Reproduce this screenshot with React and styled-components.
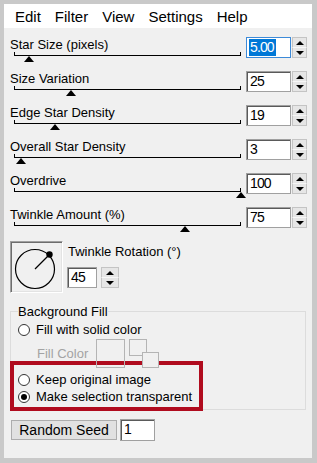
import React from 'react';
import styled, { createGlobalStyle } from 'styled-components';

const GlobalStyle = createGlobalStyle`
  html, body {
    margin: 0;
    padding: 0;
    background: #c9c9c9;
  }
  body {
    font-family: "Liberation Sans", Arial, sans-serif;
    color: #000;
  }
`;

const Frame = styled.div`
  width: 317px;
  height: 463px;
  box-sizing: border-box;
  padding: 4px 5px 5px 4px;
  background: #c9c9c9;
`;

const Panel = styled.div`
  height: 100%;
  background: #f0f0f0;
  display: flex;
  flex-direction: column;
`;

// --- menu ---
const MenuBar = styled.div`
  height: 24px;
  background: #fff;
  display: flex;
  padding-left: 4px;
  font-size: 15px;
`;

const MenuItem = styled.span`
  padding: 1px 7px 0;
  line-height: 23px;
`;

const Content = styled.div`
  padding-top: 6px;
  display: flex;
  flex-direction: column;
`;

// --- slider rows ---
const SliderRow = styled.div`
  display: flex;
  height: 34px;
  padding: 0 5px 0 6px;
`;

const SliderControl = styled.div`
  width: 231px;
  padding-top: 3px;
`;

const Label = styled.div`
  font-size: 13px;
  line-height: 15px;
  height: 15px;
  white-space: nowrap;
`;

const Track = styled.div`
  position: relative;
  margin-left: 4px;
  width: 225px;
  height: 3px;
  border: 1px solid #000;
  border-top: none;
`;

const Thumb = styled.div`
  position: absolute;
  top: 4px;
  width: 0;
  height: 0;
  border-left: 5px solid transparent;
  border-right: 5px solid transparent;
  border-bottom: 6px solid #000;
`;

const ValueGroup = styled.div`
  margin-left: auto;
  margin-top: 3px;
  display: flex;
  gap: 1px;
  height: 21px;
`;

const NumberBox = styled.div`
  width: ${p => p.$w}px;
  height: ${p => p.$h || 21}px;
  box-sizing: border-box;
  background: #fff;
  border: 1px solid ${p => (p.$focused ? '#3d8ad8' : '#a0a0a0')};
  box-shadow: ${p => (p.$focused ? 'none' : 'inset 1px 1px 0 #5a5a5a')};
  padding: 1px 0 0 3px;
  font-size: 14px;
  line-height: 17px;
  letter-spacing: -0.9px;
`;

const Selected = styled.span`
  display: inline-block;
  background: #0078d7;
  color: #fff;
  padding-right: 2px;
  margin-left: -1px;
  padding-left: 1px;
`;

const Spinner = styled.div`
  width: ${p => p.$w}px;
  height: 21px;
  display: flex;
  flex-direction: column;
`;

const SpinHalf = styled.div`
  flex: 1;
  background: #e6e6e6;
  border: 1px solid #c4c4c4;
  ${p => (p.$down ? 'border-top: 1px solid #f7f7f7;' : 'border-bottom: none;')}
  display: flex;
  align-items: center;
  justify-content: center;
`;

const Arrow = styled.span`
  width: 0;
  height: 0;
  border-left: 4px solid transparent;
  border-right: 4px solid transparent;
  ${p => (p.$down ? 'border-top: 4px solid #000;' : 'border-bottom: 4px solid #000;')}
`;

const Spin = ({ w = 15 }) => (
  <Spinner $w={w}>
    <SpinHalf><Arrow /></SpinHalf>
    <SpinHalf $down><Arrow $down /></SpinHalf>
  </Spinner>
);

const sliders = [
  { label: 'Star Size (pixels)', value: '5.00', thumb: 29, focused: true },
  { label: 'Size Variation', value: '25', thumb: 71 },
  { label: 'Edge Star Density', value: '19', thumb: 55 },
  { label: 'Overall Star Density', value: '3', thumb: 21 },
  { label: 'Overdrive', value: '100', thumb: 241 },
  { label: 'Twinkle Amount (%)', value: '75', thumb: 185 },
];

// --- rotation dial ---
const DialSection = styled.div`
  display: flex;
  gap: 5px;
  margin-top: 3px;
  padding-left: 6px;
`;

const DialBox = styled.div`
  width: 53px;
  height: 52px;
  box-sizing: border-box;
  border: 1px solid;
  border-color: #a0a0a0 #fff #fff #a0a0a0;
  box-shadow: inset 1px 1px 0 #6d6d6d, inset -1px -1px 0 #e3e3e3;
  padding: 1px;
`;

const DialSide = styled.div`
  display: flex;
  flex-direction: column;
  padding-top: 3px;
`;

const DialInputs = styled.div`
  display: flex;
  gap: 4px;
  margin-top: 8px;
  margin-left: -1px;
`;

// --- background fill ---
const GroupBox = styled.fieldset`
  margin: 11px 6px 0 6px;
  padding: 0 0 0 7px;
  border: 1px solid #dcdcdc;
  min-width: 0;
`;

const GroupTitle = styled.legend`
  padding: 0;
  font-size: 13px;
  line-height: 15px;
`;

const RadioRow = styled.div`
  display: flex;
  align-items: center;
  gap: 6px;
  height: 17px;
  font-size: 13px;
  white-space: nowrap;
  margin-top: ${p => p.$top || 0}px;
`;

const RadioCircle = styled.span`
  width: 12px;
  height: 12px;
  box-sizing: border-box;
  border-radius: 50%;
  border: 1px solid #333;
  background: #fff;
  display: flex;
  align-items: center;
  justify-content: center;

  &::after {
    content: '';
    width: 6px;
    height: 6px;
    border-radius: 50%;
    background: ${p => (p.$checked ? '#000' : 'transparent')};
  }
`;

const FillColorRow = styled.div`
  display: flex;
  align-items: center;
  height: 29px;
  margin-top: 1px;
  padding-left: 19px;
  font-size: 13px;
  color: #a3a3a3;
`;

const Swatch = styled.div`
  width: 29px;
  height: 29px;
  box-sizing: border-box;
  border: 1px solid #b4b4b4;
  margin-left: 8px;
`;

const SwatchPair = styled.div`
  position: relative;
  align-self: flex-start;
  width: 30px;
  height: 29px;
  margin-left: 4px;
`;

const SmallSquare = styled.div`
  position: absolute;
  left: ${p => p.$x}px;
  top: ${p => p.$y}px;
  width: ${p => p.$w}px;
  height: ${p => p.$h}px;
  box-sizing: border-box;
  border: 1px solid #b4b4b4;
  background: #f0f0f0;
`;

const Highlight = styled.div`
  width: 193px;
  box-sizing: border-box;
  margin: -7px 0 -2px -8px;
  padding: 6px 4px 2px 4px;
  border: 4px solid #b00b1e;
`;

// --- bottom ---
const SeedRow = styled.div`
  display: flex;
  align-items: center;
  gap: 3px;
  margin-top: 9px;
  padding-left: 7px;
`;

const Button = styled.div`
  width: 106px;
  height: 20px;
  box-sizing: border-box;
  background: #e1e1e1;
  border: 1px solid #adadad;
  font-size: 14px;
  line-height: 18px;
  text-align: center;
`;

const App = () => (
  <>
    <GlobalStyle />
    <Frame>
      <Panel>
        <MenuBar>
          {['Edit', 'Filter', 'View', 'Settings', 'Help'].map(m => (
            <MenuItem key={m}>{m}</MenuItem>
          ))}
        </MenuBar>
        <Content>
          {sliders.map(s => (
            <SliderRow key={s.label}>
              <SliderControl>
                <Label>{s.label}</Label>
                <Track>
                  <Thumb style={{ left: s.thumb - 20 }} />
                </Track>
              </SliderControl>
              <ValueGroup>
                <NumberBox $w={45} $focused={s.focused}>
                  {s.focused ? <Selected>{s.value}</Selected> : s.value}
                </NumberBox>
                <Spin />
              </ValueGroup>
            </SliderRow>
          ))}

          <DialSection>
            <DialBox>
              <svg width="49" height="48" viewBox="0 0 49 48">
                <circle cx="23" cy="26" r="19.5" fill="none" stroke="#000" strokeWidth="1.2" />
                <line x1="23" y1="26" x2="37" y2="12" stroke="#000" strokeWidth="1.2" />
                <circle cx="37.5" cy="11.5" r="3.2" fill="#000" />
              </svg>
            </DialBox>
            <DialSide>
              <Label>Twinkle Rotation (°)</Label>
              <DialInputs>
                <NumberBox $w={30}>45</NumberBox>
                <Spin w={18} />
              </DialInputs>
            </DialSide>
          </DialSection>

          <GroupBox>
            <GroupTitle>Background Fill</GroupTitle>
            <RadioRow $top={2}>
              <RadioCircle />
              Fill with solid color
            </RadioRow>
            <FillColorRow>
              Fill Color
              <Swatch />
              <SwatchPair>
                <SmallSquare $x={0} $y={0} $w={18} $h={17} />
                <SmallSquare $x={13} $y={13} $w={17} $h={16} />
              </SwatchPair>
            </FillColorRow>
            <Highlight>
              <RadioRow>
                <RadioCircle />
                Keep original image
              </RadioRow>
              <RadioRow>
                <RadioCircle $checked />
                Make selection transparent
              </RadioRow>
            </Highlight>
          </GroupBox>

          <SeedRow>
            <Button>Random Seed</Button>
            <NumberBox $w={35} $h={22}>1</NumberBox>
          </SeedRow>
        </Content>
      </Panel>
    </Frame>
  </>
);

export default App;
